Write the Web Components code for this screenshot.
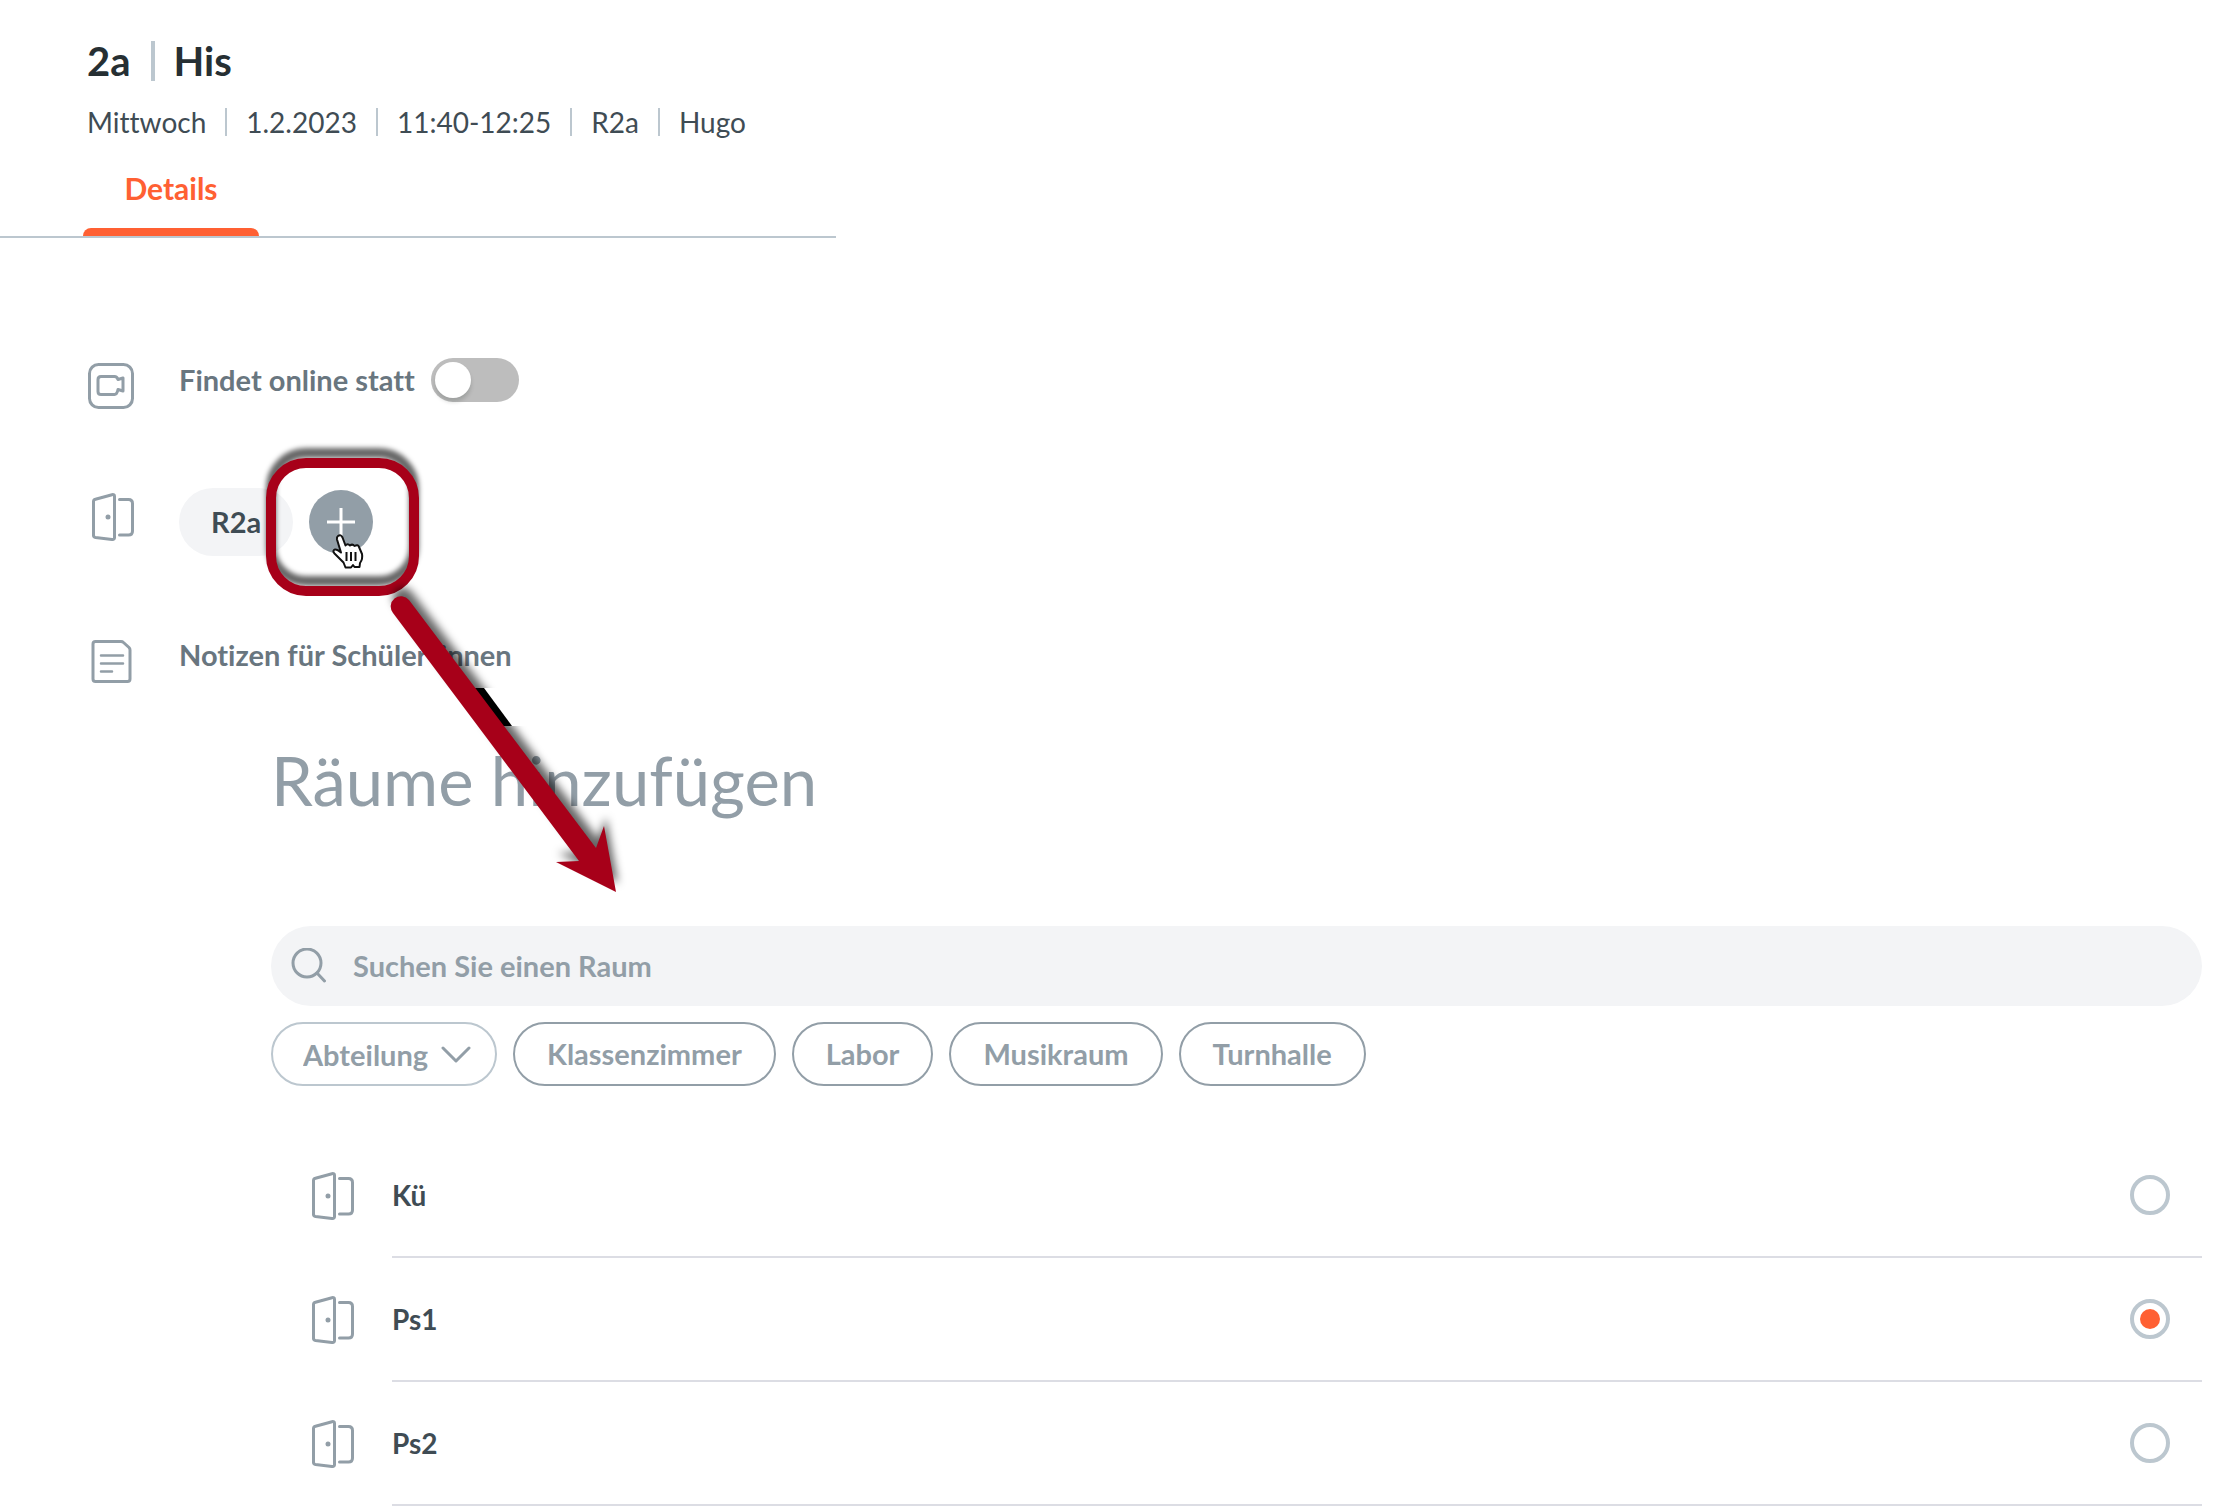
<!DOCTYPE html>
<html lang="de">
<head>
<meta charset="utf-8">
<title>2a | His</title>
<style>
    :root {
        --text: #3f4c54;
        --title: #262f33;
        --label: #69767f;
        --muted: #929ea7;
        --line: #bcc7cf;
        --divider: #dcdde4;
        --surface: #f3f4f6;
        --accent: #ff6033;
        --mark: #a70019;
        --control-size: 29px;
    }

    body {
        margin: 0;
        background: #fff;
        color: var(--text);
        font-family: Lato, "Open Sans", sans-serif;
        font-size: 28px;
        line-height: 40px;
        font-variant-ligatures: none;
    }
</style>
</head>
<body>
<lesson-page>
    <lesson-header slot="header" klasse="2a" fach="His" infos="Mittwoch|1.2.2023|11:40-12:25|R2a|Hugo"></lesson-header>

    <detail-row icon="video">
        <toggle-switch>Findet online statt</toggle-switch>
    </detail-row>
    <detail-row icon="door">
        <room-chips room="R2a"></room-chips>
    </detail-row>
    <detail-row icon="note">Notizen für Schüler*innen</detail-row>

    <room-picker slot="picker" placeholder="Suchen Sie einen Raum">
        <span slot="heading">Räume hinzufügen</span>
        <filter-select slot="filters" label="Abteilung"></filter-select>
        <filter-chip slot="filters">Klassenzimmer</filter-chip>
        <filter-chip slot="filters">Labor</filter-chip>
        <filter-chip slot="filters">Musikraum</filter-chip>
        <filter-chip slot="filters">Turnhalle</filter-chip>
        <room-list rooms="Kü,Ps1,Ps2" selected="Ps1"></room-list>
    </room-picker>

    <click-hint slot="hint"></click-hint>
</lesson-page>

<script>
    const ICONS = {
        video: `
            <rect x="1.500" y="1.500" width="43" height="43" rx="9" stroke-width="3"/>
            <path stroke-width="3" d="M13 13.500h13.500q2.500 0 3.500 3l5-1.500v13l-5-1.500q-1 5-3.500 5h-13.500q-3 0-3-3v-12q0-3 3-3z"/>`,
        door: `
            <path stroke-width="3" d="M7.500 6.200l16.500-4.500q2.500-.5 2.500 1.500v41.500q0 2-2.500 1.800l-16.500-2q-2-.3-2-2v-34q0-1.800 2-2.300z"/>
            <path stroke-width="3" d="M31.500 6.500h9q4 0 4 4v27.500q0 4-4 4h-9"/>
            <circle cx="20" cy="24" r="2.500" fill="currentColor" stroke="none"/>`,
        note: `
            <path stroke-width="3" d="M7.500 3.500h25.500q1.500 0 2.500 1l5.500 5q1 1 1 2.500v29q0 2.500-2.500 2.500h-32q-2.500 0-2.500-2.500v-35q0-2.500 2.500-2.500z"/>
            <path stroke-width="2.500" d="M13 17.500h22M13 25.500h22M13 33.500h11"/>`
    };

    class LineIcon extends HTMLElement {
        constructor() {
            super();
            this.attachShadow({ mode: 'open' });
        }

        connectedCallback() {
            this.shadowRoot.innerHTML = `
                <style>
                    :host { display: block; width: 48px; height: 48px; flex: none; color: var(--muted); }
                    svg { display: block; }
                </style>
                <svg width="48" height="48" viewBox="0 0 48 48" fill="none" stroke="currentColor"
                     stroke-linecap="round" stroke-linejoin="round" aria-hidden="true">${ICONS[this.getAttribute('name')]}</svg>
            `;
        }
    }

    class LessonPage extends HTMLElement {
        constructor() {
            super();
            this.attachShadow({ mode: 'open' }).innerHTML = `
                <style>
                    :host { display: block; position: relative; overflow: hidden; }
                    .details {
                        display: flex;
                        flex-direction: column;
                        gap: 77px;
                        padding: 120px 32px 0 88px;
                    }
                    .picker { padding: 54px 32px 2px 271px; }
                </style>
                <slot name="header"></slot>
                <main>
                    <section class="details"><slot></slot></section>
                    <section class="picker"><slot name="picker"></slot></section>
                </main>
                <slot name="hint"></slot>
            `;
        }
    }

    class LessonHeader extends HTMLElement {
        constructor() {
            super();
            this.attachShadow({ mode: 'open' });
        }

        connectedCallback() {
            const infos = this.getAttribute('infos').split('|');

            this.shadowRoot.innerHTML = `
                <style>
                    :host { display: block; max-width: 836px; padding-top: 37px; }
                    h1, ul { margin: 0; padding: 0 0 0 87px; display: flex; align-items: center; }
                    h1 { font-size: 40px; line-height: 48px; font-weight: 700; color: var(--title); margin-bottom: 17px; }
                    h1 span + span { margin-left: 20px; padding-left: 19px; border-left: 4px solid var(--line); line-height: 40px; }
                    ul { list-style: none; min-height: 40px; white-space: nowrap; }
                    li { line-height: 28px; }
                    li + li { margin-left: 19px; padding-left: 19px; border-left: 2px solid var(--line); }
                    nav { padding: 26px 0 0 83px; border-bottom: 2px solid var(--line); }
                    button {
                        display: block;
                        width: 176px;
                        padding: 0;
                        border: 0;
                        background: none;
                        font: inherit;
                        font-size: 30px;
                        font-weight: 700;
                        color: var(--accent);
                        cursor: pointer;
                    }
                    button::after {
                        content: '';
                        display: block;
                        height: 8px;
                        margin-top: 20px;
                        border-radius: 8px 8px 0 0;
                        background: var(--accent);
                    }
                </style>
                <h1><span>${this.getAttribute('klasse')}</span><span>${this.getAttribute('fach')}</span></h1>
                <ul>${infos.map(info => `<li>${info}</li>`).join('')}</ul>
                <nav><button type="button" aria-current="page">Details</button></nav>
            `;
        }
    }

    class DetailRow extends HTMLElement {
        constructor() {
            super();
            this.attachShadow({ mode: 'open' });
        }

        connectedCallback() {
            this.shadowRoot.innerHTML = `
                <style>
                    :host {
                        display: flex;
                        align-items: flex-start;
                        gap: 43px;
                        font-size: var(--control-size);
                        font-weight: 700;
                        color: var(--label);
                        line-height: 44px;
                    }
                    line-icon { padding-top: 5px; }
                </style>
                <line-icon name="${this.getAttribute('icon')}"></line-icon>
                <div><slot></slot></div>
            `;
        }
    }

    class ToggleSwitch extends HTMLElement {
        constructor() {
            super();
            this.attachShadow({ mode: 'open' }).innerHTML = `
                <style>
                    :host { display: block; }
                    label { display: flex; align-items: center; gap: 16px; }
                    input {
                        appearance: none;
                        margin: 0;
                        width: 88px;
                        height: 44px;
                        padding: 4px;
                        box-sizing: border-box;
                        border-radius: 22px;
                        background: #bdbdbd;
                        cursor: pointer;
                    }
                    input::before {
                        content: '';
                        display: block;
                        width: 36px;
                        height: 36px;
                        border-radius: 50%;
                        background: #fff;
                        box-shadow: 0 4px 4px rgba(0, 20, 10, 0.16);
                    }
                    input:checked { background: var(--accent); }
                    input:checked::before { margin-left: 44px; }
                </style>
                <label><slot></slot><input type="checkbox" role="switch"></label>
            `;
        }
    }

    class RoomChips extends HTMLElement {
        constructor() {
            super();
            this.attachShadow({ mode: 'open' });
        }

        connectedCallback() {
            this.shadowRoot.innerHTML = `
                <style>
                    :host { display: flex; align-items: center; gap: 16px; }
                    .room {
                        padding: 0 32px;
                        border-radius: 34px;
                        background: var(--surface);
                        color: var(--text);
                        font-weight: 700;
                        line-height: 68px;
                    }
                    button {
                        width: 64px;
                        height: 64px;
                        padding: 0;
                        border: 0;
                        border-radius: 50%;
                        background: var(--muted);
                        cursor: pointer;
                    }
                    svg { display: block; margin: auto; }
                </style>
                <span class="room">${this.getAttribute('room')}</span>
                <button type="button" aria-label="Raum hinzufügen">
                    <svg width="28" height="28" viewBox="0 0 28 28" stroke="#fff" stroke-width="3"><path d="M14 0v28M0 14h28"/></svg>
                </button>
            `;
        }
    }

    class RoomPicker extends HTMLElement {
        constructor() {
            super();
            this.attachShadow({ mode: 'open' });
        }

        connectedCallback() {
            this.shadowRoot.innerHTML = `
                <style>
                    :host { display: block; }
                    h2 { margin: 0 0 106px; font-size: 67px; line-height: 80px; font-weight: 400; color: var(--muted); }
                    .search {
                        display: flex;
                        align-items: center;
                        gap: 26px;
                        height: 80px;
                        padding: 0 20px;
                        border-radius: 40px;
                        background: var(--surface);
                        color: var(--muted);
                    }
                    svg { flex: none; }
                    input {
                        flex: 1;
                        min-width: 0;
                        padding: 0;
                        border: 0;
                        outline: 0;
                        background: none;
                        color: var(--text);
                        font: inherit;
                        font-size: var(--control-size);
                        font-weight: 700;
                    }
                    input::placeholder { color: var(--muted); opacity: 1; }
                    .filters { display: flex; flex-wrap: wrap; gap: 16px; margin: 16px 0 48px; }
                </style>
                <h2><slot name="heading"></slot></h2>
                <label class="search">
                    <svg width="36" height="36" viewBox="0 0 36 36" fill="none" stroke="currentColor" stroke-width="3" stroke-linecap="round" aria-hidden="true">
                        <circle cx="16" cy="15" r="14"/>
                        <path d="M26 25l7.500 8"/>
                    </svg>
                    <input type="search" aria-label="Raum suchen" placeholder="${this.getAttribute('placeholder')}">
                </label>
                <div class="filters"><slot name="filters"></slot></div>
                <slot></slot>
            `;
        }
    }

    class FilterSelect extends HTMLElement {
        constructor() {
            super();
            this.attachShadow({ mode: 'open' });
        }

        connectedCallback() {
            const label = this.getAttribute('label');

            this.shadowRoot.innerHTML = `
                <style>
                    :host { display: grid; align-items: center; color: var(--muted); }
                    select, svg { grid-area: 1 / 1; }
                    select {
                        appearance: none;
                        width: 226px;
                        height: 64px;
                        padding: 2px 0 0 30px;
                        border: 2px solid var(--line);
                        border-radius: 32px;
                        background: none;
                        color: inherit;
                        font: inherit;
                        font-size: var(--control-size);
                        font-weight: 700;
                    }
                    svg { justify-self: end; margin-right: 26px; pointer-events: none; }
                </style>
                <select aria-label="${label}"><option>${label}</option></select>
                <svg width="30" height="18" viewBox="0 0 30 18" fill="none" stroke="currentColor" stroke-width="3" stroke-linecap="round" stroke-linejoin="round"><path d="M2 3l13 13 13-13"/></svg>
            `;
        }
    }

    class FilterChip extends HTMLElement {
        constructor() {
            super();
            this.attachShadow({ mode: 'open' }).innerHTML = `
                <style>
                    :host { display: block; }
                    button {
                        height: 64px;
                        padding: 0 32px;
                        border: 2px solid var(--muted);
                        border-radius: 32px;
                        background: #fff;
                        color: var(--muted);
                        font: inherit;
                        font-size: var(--control-size);
                        font-weight: 700;
                        cursor: pointer;
                    }
                </style>
                <button type="button"><slot></slot></button>
            `;
        }
    }

    class RoomList extends HTMLElement {
        constructor() {
            super();
            this.attachShadow({ mode: 'open' });
        }

        connectedCallback() {
            const rooms = this.getAttribute('rooms').split(',');
            const selected = this.getAttribute('selected');

            this.shadowRoot.innerHTML = `
                <style>
                    :host { display: block; }
                    label { display: flex; align-items: center; gap: 36px; padding-left: 37px; cursor: pointer; }
                    .entry {
                        flex: 1;
                        display: flex;
                        align-items: center;
                        justify-content: space-between;
                        height: 122px;
                        padding-right: 32px;
                        border-bottom: 2px solid var(--divider);
                        font-weight: 700;
                    }
                    input {
                        appearance: none;
                        display: grid;
                        place-items: center;
                        width: 40px;
                        height: 40px;
                        margin: 0;
                        box-sizing: border-box;
                        border: 4px solid var(--line);
                        border-radius: 50%;
                    }
                    input:checked::before {
                        content: '';
                        width: 20px;
                        height: 20px;
                        border-radius: 50%;
                        background: var(--accent);
                    }
                </style>
                ${rooms.map(room => `
                    <label>
                        <line-icon name="door"></line-icon>
                        <span class="entry">${room}<input type="radio" name="room" value="${room}" ${room === selected ? 'checked' : ''}></span>
                    </label>
                `).join('')}
            `;
        }
    }

    // Frame, arrow and pointer that lie over the page
    class ClickHint extends HTMLElement {
        constructor() {
            super();
            this.attachShadow({ mode: 'open' }).innerHTML = `
                <style>
                    :host { position: absolute; left: 250px; top: 430px; pointer-events: none; }
                    svg { display: block; }
                </style>
                <svg width="400" height="480" viewBox="250 430 400 480" aria-hidden="true">
                    <defs>
                        <filter id="soft" x="-20%" y="-20%" width="140%" height="140%"><feGaussianBlur stdDeviation="2.500"/></filter>
                        <filter id="softer" x="-20%" y="-20%" width="140%" height="140%"><feGaussianBlur stdDeviation="4"/></filter>
                        <path id="arrow" d="M393 613L579 861L556 862L616 892L604 826L596 848L409 600A10 10 0 0 0 393 613Z"/>
                        <rect id="frame" x="271" y="463" width="143" height="128" rx="35"/>
                        <clipPath id="gap"><path d="M250 430h400v258h-400zM250 726h400v184h-400z"/></clipPath>
                    </defs>
                    <g transform="translate(332 534)">
                        <path d="M6 2q3-2 4.500 1.500l3 8q2-2.500 4.500 0 2.500-2 4.500.5 3.500-2 4.500 1l3 7q1 5-2 9l-.5 4h-5l-1.500-2-2 2.500h-5.500l-2-5-9-9q-2.500-3 .5-4 2-.5 6 3l-4-13q-.5-2.500 1-3.500z"
                              fill="#fff" stroke="#111" stroke-width="2" stroke-linejoin="round"/>
                        <path d="M14.500 18v9M19 18v9M23.500 18v9" stroke="#111" stroke-width="2"/>
                    </g>
                    <use href="#frame" y="-10" fill="none" stroke="#000" stroke-opacity=".6" stroke-width="10" filter="url(#soft)"/>
                    <use href="#frame" fill="none" stroke="var(--mark)" stroke-width="10"/>
                    <g clip-path="url(#gap)">
                        <use href="#arrow" x="2" y="-9" fill-opacity=".6" filter="url(#softer)"/>
                    </g>
                    <path d="M474 688h10l28 38h-11z"/>
                    <use href="#arrow" fill="var(--mark)"/>
                </svg>
            `;
        }
    }

    customElements.define('line-icon', LineIcon);
    customElements.define('lesson-page', LessonPage);
    customElements.define('lesson-header', LessonHeader);
    customElements.define('detail-row', DetailRow);
    customElements.define('toggle-switch', ToggleSwitch);
    customElements.define('room-chips', RoomChips);
    customElements.define('room-picker', RoomPicker);
    customElements.define('filter-select', FilterSelect);
    customElements.define('filter-chip', FilterChip);
    customElements.define('room-list', RoomList);
    customElements.define('click-hint', ClickHint);
</script>
</body>
</html>
